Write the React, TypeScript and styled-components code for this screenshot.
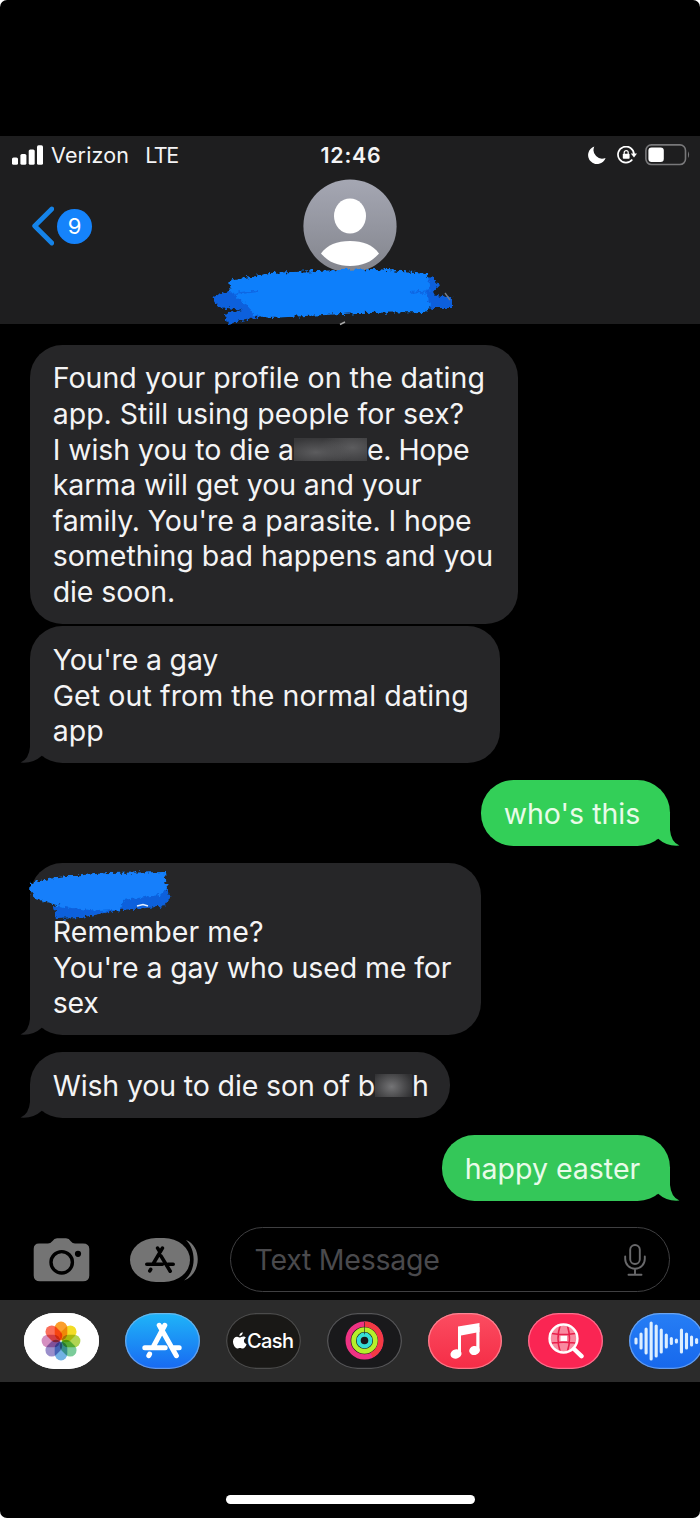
import React from "react";
import styled, { createGlobalStyle } from "styled-components";

const GlobalStyle = createGlobalStyle`
  html, body { margin: 0; padding: 0; background: #fff; }
  * { box-sizing: border-box; }
`;

const Screen = styled.main`
  width: 700px;
  height: 1518px;
  padding-top: 136px;
  display: flex;
  flex-direction: column;
  background: #000;
  border-radius: 7px;
  color: #f4f4f5;
  overflow: hidden;
  font-family: Inter, "Liberation Sans", sans-serif;
`;

const Header = styled.header`
  height: 188px;
  flex: none;
  position: relative;
  background: #1e1e1f;
`;

const StatusBar = styled.div`
  height: 39px;
  padding: 0 10px 1px 12px;
  display: grid;
  grid-template-columns: 1fr auto 1fr;
  align-items: center;
`;

const Carrier = styled.div`
  display: flex;
  align-items: center;
  font-size: 21.5px;
  line-height: 26px;
  svg { margin-right: 8px; }
`;

const Label = styled.span<{ $ls?: number; $gap?: number }>`
  letter-spacing: ${(p) => p.$ls ?? 0}px;
  margin-right: ${(p) => p.$gap ?? 0}px;
  white-space: pre;
`;

const Clock = styled.time`
  font-size: 21.3px;
  font-weight: 600;
  letter-spacing: 0.8px;
`;

const StatusIcons = styled.div`
  display: flex;
  justify-content: flex-end;
  align-items: center;
`;

const Nav = styled.div`
  display: grid;
  grid-template-columns: 1fr 94px 1fr;
  padding: 4px 32px 0;
  align-items: center;
`;

const Back = styled.div`
  display: flex;
  align-items: center;
  gap: 3px;
`;

const Count = styled.span`
  width: 35px;
  height: 35px;
  border-radius: 50%;
  background: #1583fb;
  color: #fff;
  font-size: 22px;
  line-height: 35px;
  text-align: center;
`;

const Scribble = styled.svg<{ $x: number; $y: number }>`
  position: absolute;
  left: ${(p) => p.$x}px;
  top: ${(p) => p.$y}px;
  overflow: visible;
`;

const Thread = styled.section`
  height: 903px;
  flex: none;
  padding: 20.8px 30px 0;
  display: flex;
  flex-direction: column;
`;

const Bubble = styled.article<{ $w: number; $sent?: string; $gap: number }>`
  position: relative;
  width: ${(p) => p.$w}px;
  flex: none;
  align-self: ${(p) => (p.$sent ? "flex-end" : "flex-start")};
  margin-bottom: ${(p) => p.$gap}px;
  padding: 15.7px 0 14.2px 22.7px;
  border-radius: 32.5px;
  background: ${(p) => p.$sent ?? "#262628"};
  color: ${(p) => (p.$sent ? "#e9fbe9" : "#f4f4f5")};
  font-size: 28.5px;
  line-height: 35.6px;
`;

const Line = styled.div<{ $ls?: number }>`
  height: 35.6px;
  white-space: pre;
  letter-spacing: ${(p) => p.$ls ?? 0}px;
`;

const Smudge = styled.span<{ $w: number; $fill: string }>`
  display: inline-block;
  vertical-align: -1px;
  width: ${(p) => p.$w}px;
  height: 23px;
  background: ${(p) => p.$fill};
`;

const TailSvg = styled.svg<{ $side: "left" | "right" }>`
  position: absolute;
  bottom: 0;
  ${(p) => p.$side}: -10px;
  transform: ${(p) => (p.$side === "right" ? "scaleX(-1)" : "none")};
`;

const Tail = ({ side, color }: { side: "left" | "right"; color: string }) => (
  <TailSvg $side={side} width="34" height="34" viewBox="0 0 34 34">
    <path d="M10 0H23V27.6L21.8 26.8Q13 34.8 0.6 33.6Q9 30 10 18Z" fill={color} />
  </TailSvg>
);

const Composer = styled.div`
  display: flex;
  align-items: center;
  height: 72.5px;
  flex: none;
  padding: 0 30px 7px 33px;
`;

const Field = styled.div`
  margin-left: 32px;
  width: 440px;
  height: 65px;
  border: 1.7px solid #3f3f41;
  border-radius: 33px;
  padding: 0 23px 0 23.5px;
  display: flex;
  align-items: center;
  justify-content: space-between;
  color: #4a4a4d;
  font-size: 28.5px;
`;

const Drawer = styled.footer`
  height: 82.5px;
  flex: none;
  display: flex;
  align-items: center;
  gap: 26px;
  padding-left: 24px;
  background: #2b2b2b;
`;

const AppPill = styled.div<{ $bg: string; $edge: string }>`
  width: 74.9px;
  height: 56.5px;
  flex: none;
  border-radius: 31px / 28.25px;
  background: ${(p) => p.$bg};
  box-shadow: inset 0 0 0 1.3px ${(p) => p.$edge};
  display: flex;
  align-items: center;
  justify-content: center;
`;

const CashText = styled.span`
  color: #fff;
  font-size: 20px;
  font-weight: 500;
  letter-spacing: -0.6px;
`;

const PhotosIcon = styled.svg`
  isolation: isolate;
  rect { mix-blend-mode: multiply; }
`;

const HomeArea = styled.div`
  flex: 1;
  display: flex;
  justify-content: center;
  align-items: flex-end;
  padding-bottom: 14.5px;
`;

const HomeBar = styled.div`
  width: 249px;
  height: 9px;
  border-radius: 5px;
  background: #fff;
`;

const petals = ["#fb9e2b", "#f3dc25", "#b0d552", "#7bcc9a", "#72b2e4", "#9a8fcb", "#d58fc0", "#fa6e5a"];
const waves = [7, 17, 27, 39, 33, 25, 15, 8, 5, 25, 17, 11, 6];
const smear = (a: string, b: string) =>
  `radial-gradient(ellipse 50% 60% at 30% 62%, ${b}, transparent), radial-gradient(ellipse 45% 75% at 80% 42%, ${b}, transparent), ${a}`;

export default function App() {
  return (
    <Screen>
      <GlobalStyle />
      <Header>
        <StatusBar>
          <Carrier>
            <svg width="31" height="20" viewBox="0 0 31 20" fill="#fff">
              <rect y="12.5" width="6" height="7.3" rx="1.6" />
              <rect x="8.4" y="9" width="6" height="10.8" rx="1.6" />
              <rect x="16.7" y="4.5" width="6" height="15.3" rx="1.6" />
              <rect x="25" y="0.3" width="6" height="19.5" rx="1.6" />
            </svg>
            <Label $ls={0.15} $gap={16}>Verizon</Label>
            <Label $ls={-1.4}>LTE</Label>
          </Carrier>
          <Clock>12:46</Clock>
          <StatusIcons>
            <svg width="18" height="18" viewBox="0 0 18 18" fill="#fff">
              <path d="M6.3 0.5A9 9 0 1 0 17.6 12A8.7 8.7 0 0 1 6.3 0.5Z" />
            </svg>
            <svg width="20" height="18" viewBox="0 0 20 18" fill="none" stroke="#fff" strokeWidth="1.7" style={{ marginLeft: 11 }}>
              <path d="M15.3 13.5A8 8 0 1 1 17 8.3" />
              <path d="M13.8 7.5H20L17 11.6Z" fill="#fff" stroke="none" />
              <rect x="5.8" y="7.8" width="6.8" height="5" rx="0.8" fill="#fff" stroke="none" />
              <path d="M7.2 8V6.6a2 2 0 0 1 4 0V8" strokeWidth="1.2" />
            </svg>
            <svg width="45" height="22" viewBox="0 0 45 22" style={{ marginLeft: 8 }}>
              <rect x="0.9" y="0.9" width="39.6" height="19.6" rx="5.5" fill="none" stroke="#78787a" strokeWidth="1.6" />
              <rect x="3.4" y="3.4" width="15.4" height="14.6" rx="3.2" fill="#fff" />
              <path d="M43 7.3Q45.2 10.7 43 14Z" fill="#78787a" />
            </svg>
          </StatusIcons>
        </StatusBar>
        <Nav>
          <Back>
            <svg width="22" height="40" viewBox="0 0 22 40" fill="none" stroke="#1583e8" strokeWidth="4.8" strokeLinecap="round" strokeLinejoin="round">
              <path d="M19.8 3L2.7 20L19.8 37" />
            </svg>
            <Count>9</Count>
          </Back>
          <svg width="94" height="94" viewBox="0 0 94 94">
            <defs>
              <linearGradient id="av" x2="0" y2="1"><stop stopColor="#a5a7b3" /><stop offset="1" stopColor="#83858d" /></linearGradient>
            </defs>
            <circle cx="47" cy="47" r="46.6" fill="url(#av)" />
            <ellipse cx="47" cy="37" rx="16" ry="17.6" fill="#fff" />
            <path d="M18 74.5C24 66 34 62 47 62S70 66 76 74.5C69 83 59 87 47 87S25 83 18 74.5Z" fill="#fff" />
          </svg>
        </Nav>
        <Scribble $x={210} $y={125} width="244" height="64" viewBox="0 0 244 64">
          <defs>
            <filter id="rough" x="-5%" y="-15%" width="110%" height="130%">
              <feTurbulence type="fractalNoise" baseFrequency="0.28" numOctaves="2" seed="4" />
              <feDisplacementMap in="SourceGraphic" scale="7" xChannelSelector="R" yChannelSelector="G" />
            </filter>
          </defs>
          <g filter="url(#rough)">
            <path d="M3 36L20 29L60 34L62 50L45 57L18 63L15 53L32 49L8 46Z" fill="#0a60dc" />
            <path d="M200 22L221 16L230 24L222 33L242 37L242 47L222 47L200 42Z" fill="#0a5fdc" />
            <path d="M19 20L60 12L130 9L165 8L218 12L219 25L216 33L221 44L216 51L150 52L60 57L44 54L33 40L21 31Z" fill="#107ffb" />
            <path d="M24 33L48 30M200 32L220 30" stroke="#0967e4" strokeWidth="2" />
          </g>
          <path d="M235 32L240 39" stroke="#77818c" strokeWidth="1.3" />
          <path d="M130 63.5L135 61" stroke="#aaa" strokeWidth="1.5" />
        </Scribble>
      </Header>

      <Thread>
        <Bubble $w={488} $gap={2.6}>
          <Line $ls={0.05}>Found your profile on the dating</Line>
          <Line>app. Still using people for sex?</Line>
          <Line $ls={-0.06}>
            I wish you to die a
            <Smudge $w={73} $fill={smear("#38383a", "#5c5c5e")} />
            <Label $ls={-0.4}>e. Hope</Label>
          </Line>
          <Line $ls={-0.08}>karma will get you and your</Line>
          <Line $ls={-0.11}>family. You're a parasite. I hope</Line>
          <Line>something bad happens and you</Line>
          <Line $ls={-0.1}>die soon.</Line>
        </Bubble>
        <Bubble $w={470} $gap={17.4}>
          <Tail side="left" color="#262628" />
          <Line $ls={-0.18}>You're a gay</Line>
          <Line $ls={0.1}>Get out from the normal dating</Line>
          <Line>app</Line>
        </Bubble>
        <Bubble $w={189} $gap={17} $sent="#33cf58">
          <Tail side="right" color="#33cf58" />
          <Line>who's this</Line>
        </Bubble>
        <Bubble $w={451} $gap={17.2}>
          <Tail side="left" color="#262628" />
          <Line> </Line>
          <Line $ls={0.08}>Remember me?</Line>
          <Line $ls={-0.12}>You're a gay who used me for</Line>
          <Line $ls={-0.2}>sex</Line>
          <Scribble $x={-2} $y={7} width="142" height="50" viewBox="0 0 142 50">
            <g filter="url(#rough)">
              <path d="M26 36L70 30L120 24L139 18L142 31L132 37L92 40L52 48L28 49Z" fill="#0a60dc" />
              <path d="M2 13L30 7L80 3L137 2L139 18L132 25L96 30L92 40L70 41L35 37L8 29L1 20Z" fill="#127ffb" />
            </g>
            <path d="M109 36L115 34.5L120 36" stroke="#e5efff" strokeWidth="1.6" fill="none" />
          </Scribble>
        </Bubble>
        <Bubble $w={420} $gap={17.2}>
          <Tail side="left" color="#262628" />
          <Line $ls={-0.13}>
            Wish you to die son of b
            <Smudge $w={37} $fill="radial-gradient(ellipse 60% 80% at 45% 55%, #747476, #4a4a4c 60%, #303032)" />
            h
          </Line>
        </Bubble>
        <Bubble $w={228} $gap={0} $sent="#34c759">
          <Tail side="right" color="#34c759" />
          <Line>happy easter</Line>
        </Bubble>
      </Thread>

      <Composer>
        <svg width="57" height="44" viewBox="0 0 57 44">
          <path d="M6 5.5H15Q17.5 5.5 19 3.5Q21.5 0.3 24 0.3H33Q36 .3 38 3.5Q39.5 5.5 42 5.5H50Q56.3 5.5 56.3 11V37.5Q56.3 43.3 50 43.3H7Q.7 43.3 .7 37.5V11Q.7 5.5 6 5.5Z" fill="#747474" />
          <circle cx="28.7" cy="24.3" r="10.7" fill="none" stroke="#000" strokeWidth="3.4" />
          <circle cx="45" cy="15.8" r="3.1" fill="#000" />
        </svg>
        <svg width="68" height="44" viewBox="0 0 68 44" style={{ marginLeft: 40 }}>
          <rect width="60" height="44" rx="26" ry="22" fill="#747474" />
          <path d="M56 2C72 8 72 36 54 42.5C66.5 33 66.5 12 56 2Z" fill="#747474" />
          <svg x="15" y="8" width="30" height="27" viewBox="0 0 100 90" fill="none" stroke="#000" strokeWidth="12" strokeLinecap="round">
            <path d="M58 7L27 60M42 7L50 20M53 33L84 84M6 61H58M76 61H94M19 78L16 83" />
          </svg>
        </svg>
        <Field>
          <Label $ls={-0.25}>Text Message</Label>
          <svg width="22" height="32" viewBox="0 0 22 32" fill="none" stroke="#69696b" strokeWidth="1.9" strokeLinecap="round">
            <rect x="6.2" y="1" width="9.6" height="19" rx="4.8" />
            <path d="M1.2 12.5V15a9.8 9.8 0 0 0 19.6 0V12.5M11 25V30.6M4.5 30.8H17.5" />
          </svg>
        </Field>
      </Composer>

      <Drawer>
        <AppPill $bg="#fff" $edge="#fff">
          <PhotosIcon width="40" height="40" viewBox="-20 -20 40 40">
            {petals.map((c, i) => (
              <rect key={c} x="-6.3" y="-19.4" width="12.6" height="18.6" rx="6.3" fill={c} transform={`rotate(${i * 45})`} />
            ))}
          </PhotosIcon>
        </AppPill>
        <AppPill $bg="linear-gradient(#1fb5f8,#1869f2)" $edge="rgba(160,190,230,.55)">
          <svg width="40" height="37" viewBox="0 0 100 92" fill="none" stroke="#fff" strokeWidth="12.5" strokeLinecap="round">
            <path d="M57 8L28 62M43 8L86 84M7 64H58M78 64H93M19 80L17 84" />
          </svg>
        </AppPill>
        <AppPill $bg="#191816" $edge="#4b4b4b">
          <svg width="14" height="17" viewBox="0 0 14 17" fill="#fff">
            <path d="M9.7 .2C9.9 2.3 8.2 4.1 6.4 4.1C6.2 2.2 7.9 .5 9.7 .2ZM12.9 5.8C9.9 7.5 10.5 11 13.6 12.2C12.7 14.7 11.2 16.7 9.6 16.6C8.4 16.5 8.2 15.9 7 15.9C5.7 15.9 5.4 16.6 4.3 16.6C2.2 16.6 0 12.7 0 9.6C0 6.5 2 4.7 4.1 4.7C5.4 4.7 6.3 5.5 7.1 5.5C7.9 5.5 8.9 4.6 10.4 4.6C11.4 4.7 12.3 5 12.9 5.8Z" />
          </svg>
          <CashText>Cash</CashText>
        </AppPill>
        <AppPill $bg="#19191b" $edge="#555557">
          <svg width="39" height="39" viewBox="0 0 38 38" fill="none" strokeWidth="5">
            <circle cx="19" cy="19" r="16" stroke="#ee3383" />
            <path d="M19 3A16 16 0 0 1 26 33.3" stroke="#f43a43" />
            <circle cx="19" cy="19" r="10.6" stroke="#b5f02b" strokeWidth="4.6" />
            <circle cx="19" cy="19" r="5.7" stroke="#37dfd5" strokeWidth="4" />
            <path d="M19 1V13" stroke="#202020" strokeWidth="1" opacity=".6" />
          </svg>
        </AppPill>
        <AppPill $bg="linear-gradient(#fb4d61,#f52c46)" $edge="rgba(255,170,180,.6)">
          <svg width="32" height="38" viewBox="0 0 32 38" fill="#fff">
            <path d="M9 4.5L30.5 1V10L12 13.5V32H9Z" />
            <path d="M27.3 5H30.5V29H27.3Z" />
            <ellipse cx="7" cy="32" rx="5.6" ry="4.6" transform="rotate(-12 7 32)" />
            <ellipse cx="25.5" cy="28.5" rx="5.4" ry="4.5" transform="rotate(-12 25.5 28.5)" />
          </svg>
        </AppPill>
        <AppPill $bg="#fa2553" $edge="rgba(255,160,180,.6)">
          <svg width="36" height="36" viewBox="0 0 36 36" fill="none" stroke="#fff" strokeLinecap="round">
            <circle cx="15.5" cy="15.5" r="13" fill="#f98aa0" strokeWidth="0" />
            <path d="M4 10.5Q15.5 12.5 27 10.5M4 20Q15.5 18.5 27 20M12 3Q8 15.5 12 28M19.5 3Q23.5 15.5 19.5 28" stroke="#e81f4b" strokeWidth="1.6" />
            <rect x="12.5" y="12.8" width="6.5" height="5.2" fill="#fff" stroke="none" />
            <circle cx="15.5" cy="15.5" r="13.9" strokeWidth="2.5" />
            <path d="M26 26L33.5 33.2" strokeWidth="4.4" />
          </svg>
        </AppPill>
        <AppPill $bg="linear-gradient(#267ef5,#1768ec)" $edge="rgba(150,190,240,.6)">
          <svg width="66" height="40" viewBox="0 0 66 40" stroke="#dceeff" strokeWidth="3.1" strokeLinecap="round">
            {waves.map((h, i) => (
              <path key={i} d={`M${2 + i * 5.05} ${20 - (h - 3) / 2}V${20 + (h - 3) / 2}`} />
            ))}
          </svg>
        </AppPill>
      </Drawer>

      <HomeArea><HomeBar /></HomeArea>
    </Screen>
  );
}
